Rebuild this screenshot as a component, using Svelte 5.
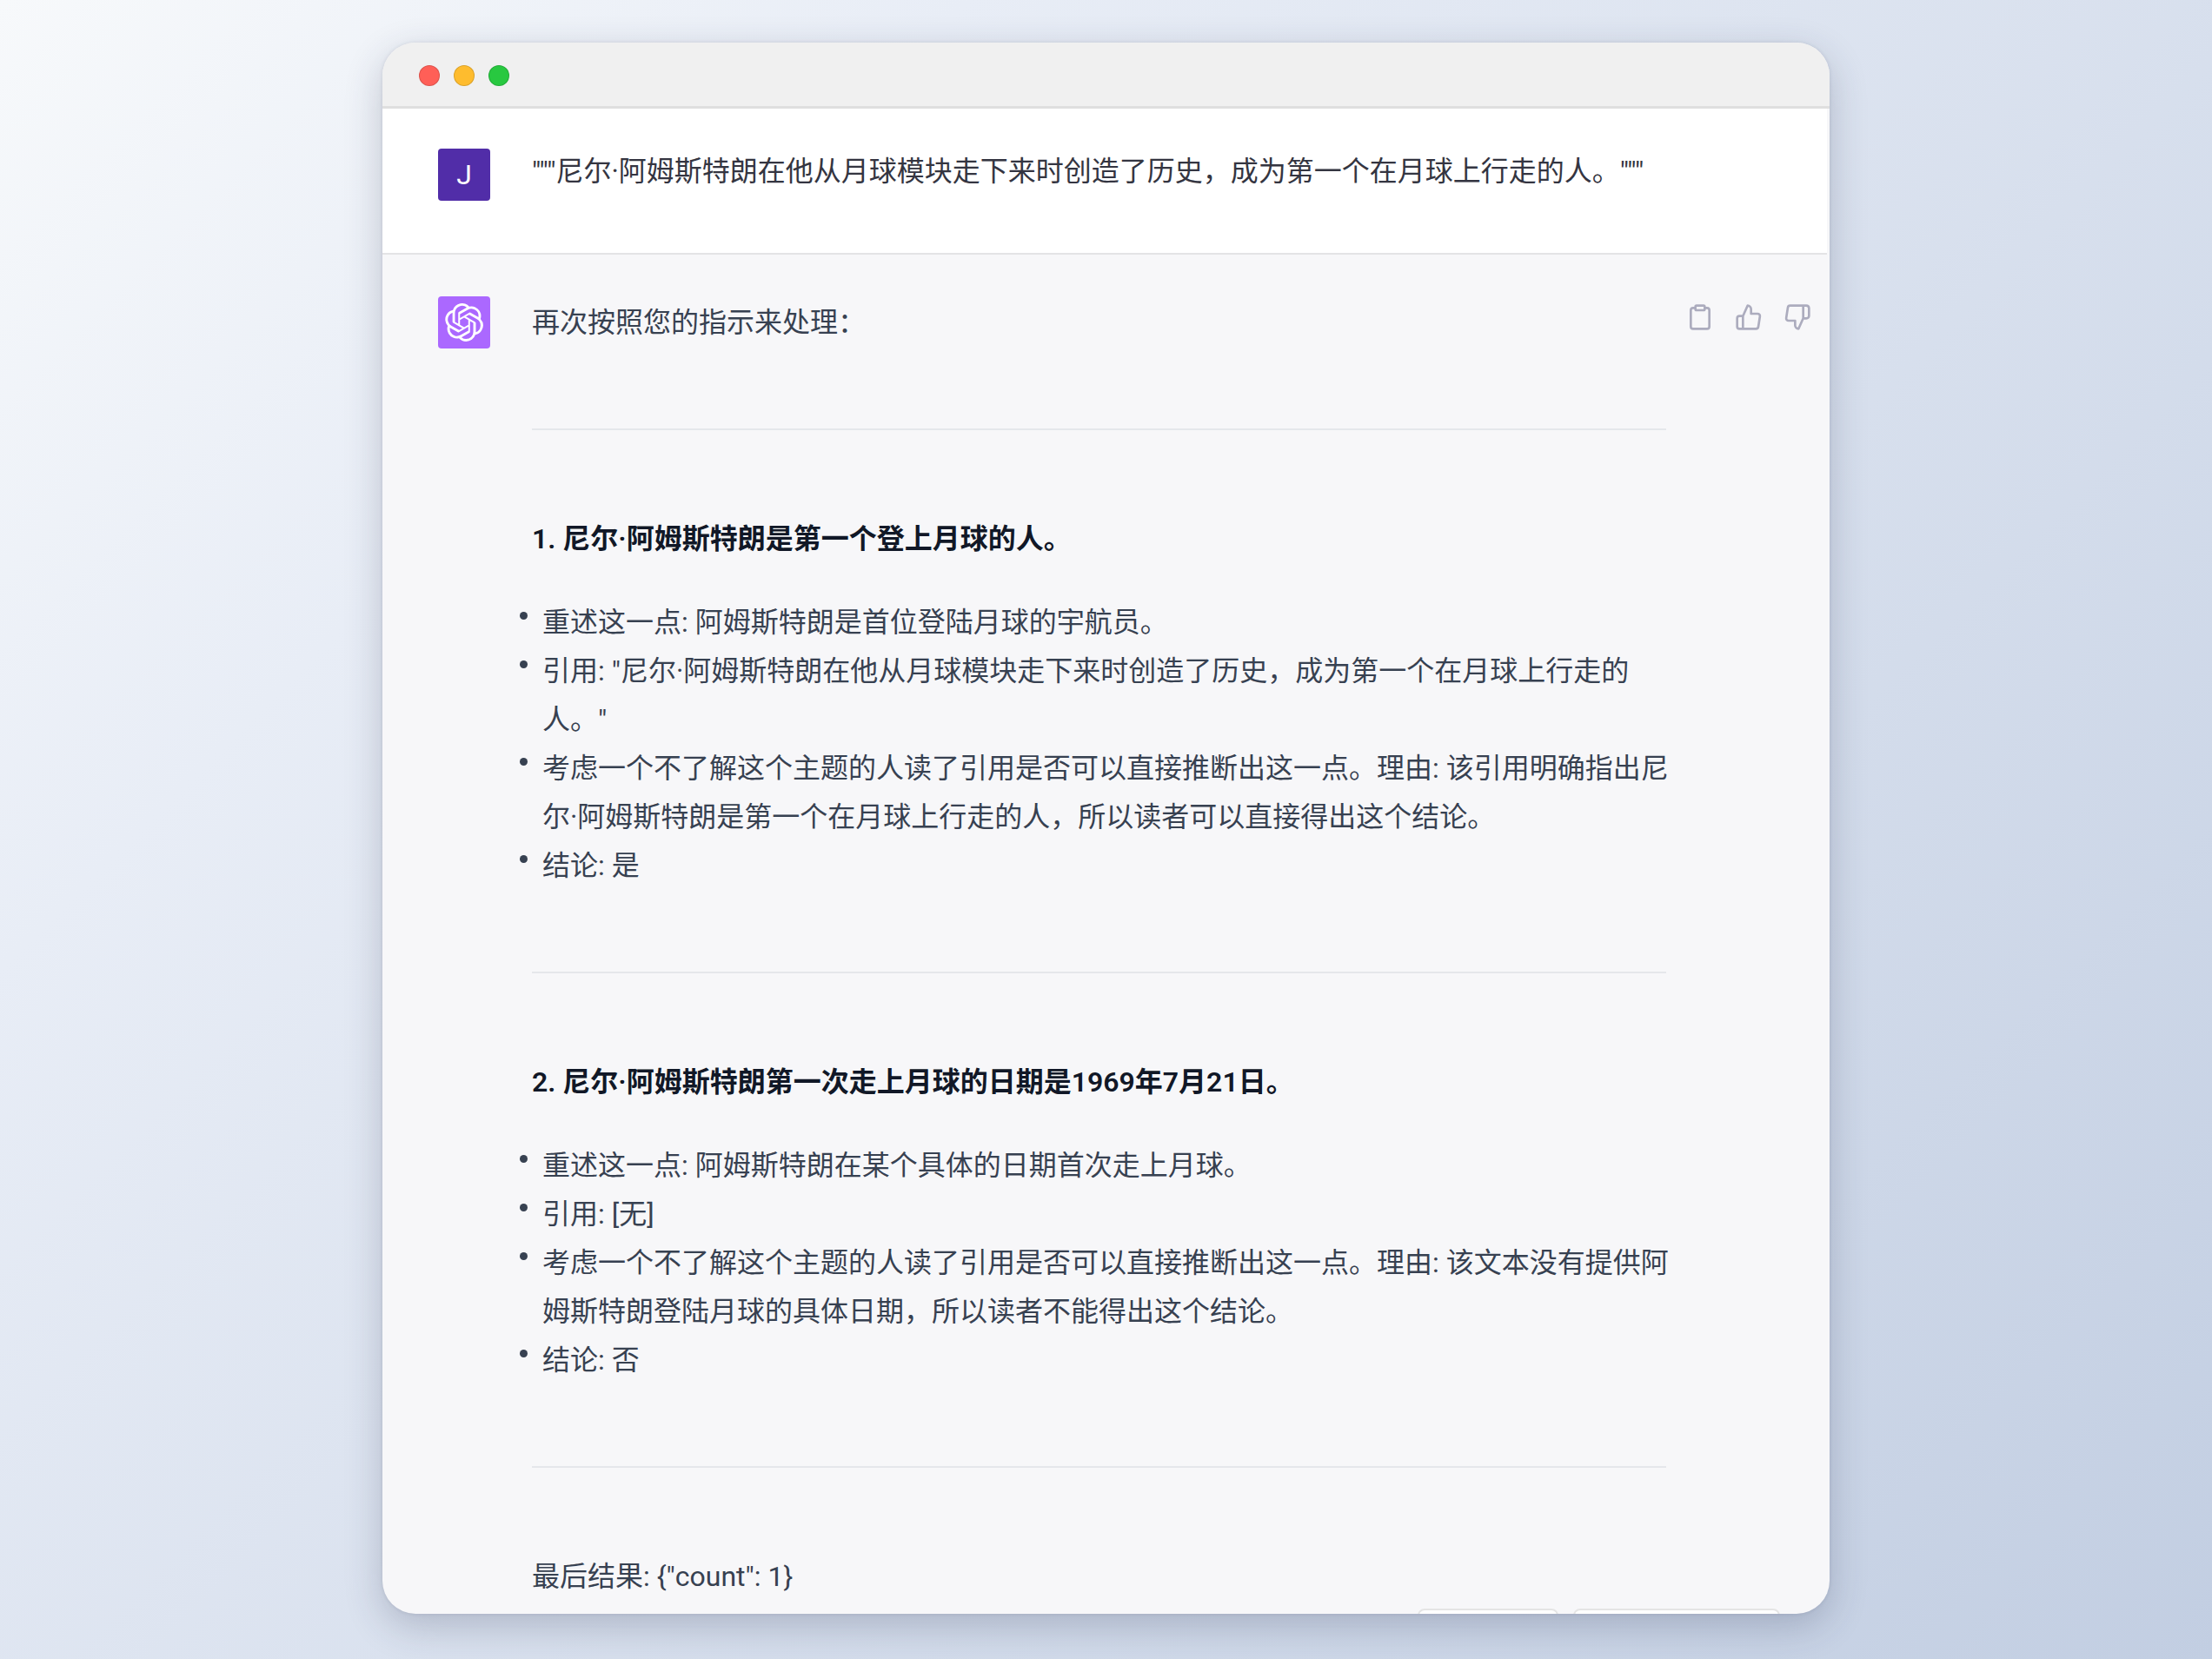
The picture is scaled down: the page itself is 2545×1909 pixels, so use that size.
<!--
  Chat transcript inside a desktop window frame.
  The conversation is clipped by the window, the reply controls float at its foot.
-->
<script lang="ts">
  interface Point {
    title: string
    items: string[]
  }

  const prompt = '"""尼尔·阿姆斯特朗在他从月球模块走下来时创造了历史，成为第一个在月球上行走的人。"""'
  const intro = '再次按照您的指示来处理：'
  const result = '最后结果: {"count": 1}'

  const points: Point[] = [
    {
      title: '1. 尼尔·阿姆斯特朗是第一个登上月球的人。',
      items: [
        '重述这一点: 阿姆斯特朗是首位登陆月球的宇航员。',
        '引用: "尼尔·阿姆斯特朗在他从月球模块走下来时创造了历史，成为第一个在月球上行走的人。"',
        '考虑一个不了解这个主题的人读了引用是否可以直接推断出这一点。理由: 该引用明确指出尼尔·阿姆斯特朗是第一个在月球上行走的人，所以读者可以直接得出这个结论。',
        '结论: 是',
      ],
    },
    {
      title: '2. 尼尔·阿姆斯特朗第一次走上月球的日期是1969年7月21日。',
      items: [
        '重述这一点: 阿姆斯特朗在某个具体的日期首次走上月球。',
        '引用: [无]',
        '考虑一个不了解这个主题的人读了引用是否可以直接推断出这一点。理由: 该文本没有提供阿姆斯特朗登陆月球的具体日期，所以读者不能得出这个结论。',
        '结论: 否',
      ],
    },
  ]
</script>

<div class="stage">
  <main class="window">
    <header class="titlebar">
      <span class="dot red"></span>
      <span class="dot yellow"></span>
      <span class="dot green"></span>
    </header>

    <section class="message user">
      <div class="avatar">J</div>
      <p class="body">{prompt}</p>
    </section>

    <section class="message assistant">
      <div class="avatar">
        <svg viewBox="0 0 24 24" aria-hidden="true">
          <path d="M22.2819 9.8211a5.9847 5.9847 0 0 0-.5157-4.9108 6.0462 6.0462 0 0 0-6.5098-2.9A6.0651 6.0651 0 0 0 4.9807 4.1818a5.9847 5.9847 0 0 0-3.9977 2.9 6.0462 6.0462 0 0 0 .7427 7.0966 5.98 5.98 0 0 0 .511 4.9107 6.051 6.051 0 0 0 6.5146 2.9001A5.9847 5.9847 0 0 0 13.2599 24a6.0557 6.0557 0 0 0 5.7718-4.2058 5.9894 5.9894 0 0 0 3.9977-2.9001 6.0557 6.0557 0 0 0-.7475-7.0729zm-9.022 12.6081a4.4755 4.4755 0 0 1-2.8764-1.0408l.1419-.0804 4.7783-2.7582a.7948.7948 0 0 0 .3927-.6813v-6.7369l2.02 1.1686a.071.071 0 0 1 .038.052v5.5826a4.504 4.504 0 0 1-4.4945 4.4944zm-9.6607-4.1254a4.4708 4.4708 0 0 1-.5346-3.0137l.142.0852 4.783 2.7582a.7712.7712 0 0 0 .7806 0l5.8428-3.3685v2.3324a.0804.0804 0 0 1-.0332.0615L9.74 19.9502a4.4992 4.4992 0 0 1-6.1408-1.6464zM2.3408 7.8956a4.485 4.485 0 0 1 2.3655-1.9728V11.6a.7664.7664 0 0 0 .3879.6765l5.8144 3.3543-2.0201 1.1685a.0757.0757 0 0 1-.071 0l-4.8303-2.7865A4.504 4.504 0 0 1 2.3408 7.8956zm16.5963 3.8558L13.1038 8.364 15.1192 7.2a.0757.0757 0 0 1 .071 0l4.8303 2.7913a4.4944 4.4944 0 0 1-.6765 8.1042v-5.6772a.79.79 0 0 0-.407-.667zm2.0107-3.0231l-.142-.0852-4.7735-2.7818a.7759.7759 0 0 0-.7854 0L9.409 9.2297V6.8974a.0662.0662 0 0 1 .0284-.0615l4.8303-2.7866a4.4992 4.4992 0 0 1 6.6802 4.66zM8.3065 12.863l-2.02-1.1638a.0804.0804 0 0 1-.038-.0567V6.0742a4.4992 4.4992 0 0 1 7.3757-3.4537l-.142.0805L8.704 5.459a.7948.7948 0 0 0-.3927.6813zm1.0976-2.3654l2.602-1.4998 2.6069 1.4998v2.9994l-2.5974 1.4997-2.6067-1.4997Z" />
        </svg>
      </div>

      <article class="body">
        <p>{intro}</p>
        <hr />
        {#each points as point (point.title)}
          <h3>{point.title}</h3>
          <ul>
            {#each point.items as item}
              <li>{item}</li>
            {/each}
          </ul>
          <hr />
        {/each}
        <p>{result}</p>
      </article>

      <div class="actions">
        <button type="button" aria-label="复制">
          <svg class="icon" viewBox="0 0 24 24">
            <path d="M16 4h2a2 2 0 0 1 2 2v14a2 2 0 0 1-2 2H6a2 2 0 0 1-2-2V6a2 2 0 0 1 2-2h2" />
            <rect x="8" y="2" width="8" height="4" rx="1" ry="1" />
          </svg>
        </button>
        <button type="button" aria-label="赞">
          <svg class="icon" viewBox="0 0 24 24">
            <path d="M14 9V5a3 3 0 0 0-3-3l-4 9v11h11.28a2 2 0 0 0 2-1.7l1.38-9a2 2 0 0 0-2-2.3zM7 22H4a2 2 0 0 1-2-2v-7a2 2 0 0 1 2-2h3" />
          </svg>
        </button>
        <button type="button" aria-label="踩">
          <svg class="icon" viewBox="0 0 24 24">
            <path d="M10 15v4a3 3 0 0 0 3 3l4-9V2H5.72a2 2 0 0 0-2 1.7l-1.38 9a2 2 0 0 0 2 2.3zm7-13h2.67A2.31 2.31 0 0 1 22 4v7a2.31 2.31 0 0 1-2.33 2H17" />
          </svg>
        </button>
      </div>
    </section>

    <footer class="controls">
      <button class="share" type="button" aria-label="分享"></button>
      <button class="regenerate" type="button" aria-label="重新生成"></button>
    </footer>
  </main>
</div>

<style>
  :global(body) { margin: 0; }
  .stage { box-sizing: border-box; display: flex; height: 100vh; padding: 49px 440px 52px; overflow: hidden; background: linear-gradient(135deg, #f7f9fb 0%, #e8edf6 25%, #c2cee2 100%); font-family: Roboto, "Noto Sans CJK SC", sans-serif; font-size: 32px; line-height: 56px; color: #374151; }
  .window { position: relative; display: flex; flex: 1; flex-direction: column; min-width: 0; overflow: hidden; border-radius: 38px; background: #f7f7f9; box-shadow: 0 0 4px rgba(40, 50, 80, 0.12), 0 14px 44px rgba(40, 50, 80, 0.24); }

  .titlebar { display: flex; flex: none; align-items: center; gap: 16px; height: 71px; padding: 2px 42px 0; border-bottom: 3px solid #dfdfdf; background: #f0f0f0; }
  .dot { box-sizing: border-box; width: 24px; height: 24px; border: 1px solid rgba(0, 0, 0, 0.14); border-radius: 50%; }
  .red { background: #ff5f57; }
  .yellow { background: #febc2e; }
  .green { background: #28c840; }

  .message { display: flex; flex: none; align-items: flex-start; gap: 48px; padding-left: 64px; }
  .user { margin-right: 3px; padding-top: 46px; padding-bottom: 60px; border-bottom: 2px solid #e3e3e5; background: #fff; color: #343541; }
  .assistant { padding-top: 48px; }
  .avatar { display: flex; flex: none; align-items: center; justify-content: center; width: 60px; height: 60px; border-radius: 4px; background: #512da8; color: #fff; }
  .assistant .avatar { background: #ab68ff; }
  .avatar svg { width: 44px; height: 44px; fill: currentColor; }

  .body { flex: 1; min-width: 0; }
  .user .body { margin: -2px 0 0; white-space: nowrap; }
  .assistant .body { padding-top: 2px; }
  p { margin: 0; }
  hr { margin: 94px 0 97px; border: 0; border-top: 2px solid #e5e7eb; }
  h3 { margin: 0 0 40px; font-size: 32px; font-weight: 600; line-height: 56px; color: #111827; }
  ul { margin: 0 -4px 0 0; padding: 0 0 0 12px; list-style: none; }
  li { position: relative; line-break: strict; }
  li::before { content: ""; position: absolute; top: 16px; left: -26px; width: 9px; height: 9px; border-radius: 50%; background: #374151; }

  .actions { display: flex; gap: 8px; margin-left: -33px; padding-right: 13px; }
  .actions button { display: flex; padding: 8px; border: 0; background: none; color: #acacbe; }
  .icon { width: 32px; height: 32px; fill: none; stroke: currentColor; stroke-width: 2; stroke-linecap: round; stroke-linejoin: round; }

  .controls { position: absolute; right: 57px; bottom: -62px; display: flex; gap: 17px; }
  .controls button { box-sizing: border-box; height: 68px; border: 2px solid #e5e5e5; border-radius: 8px; background: #fff; }
  .share { width: 162px; }
  .regenerate { width: 238px; }
</style>
